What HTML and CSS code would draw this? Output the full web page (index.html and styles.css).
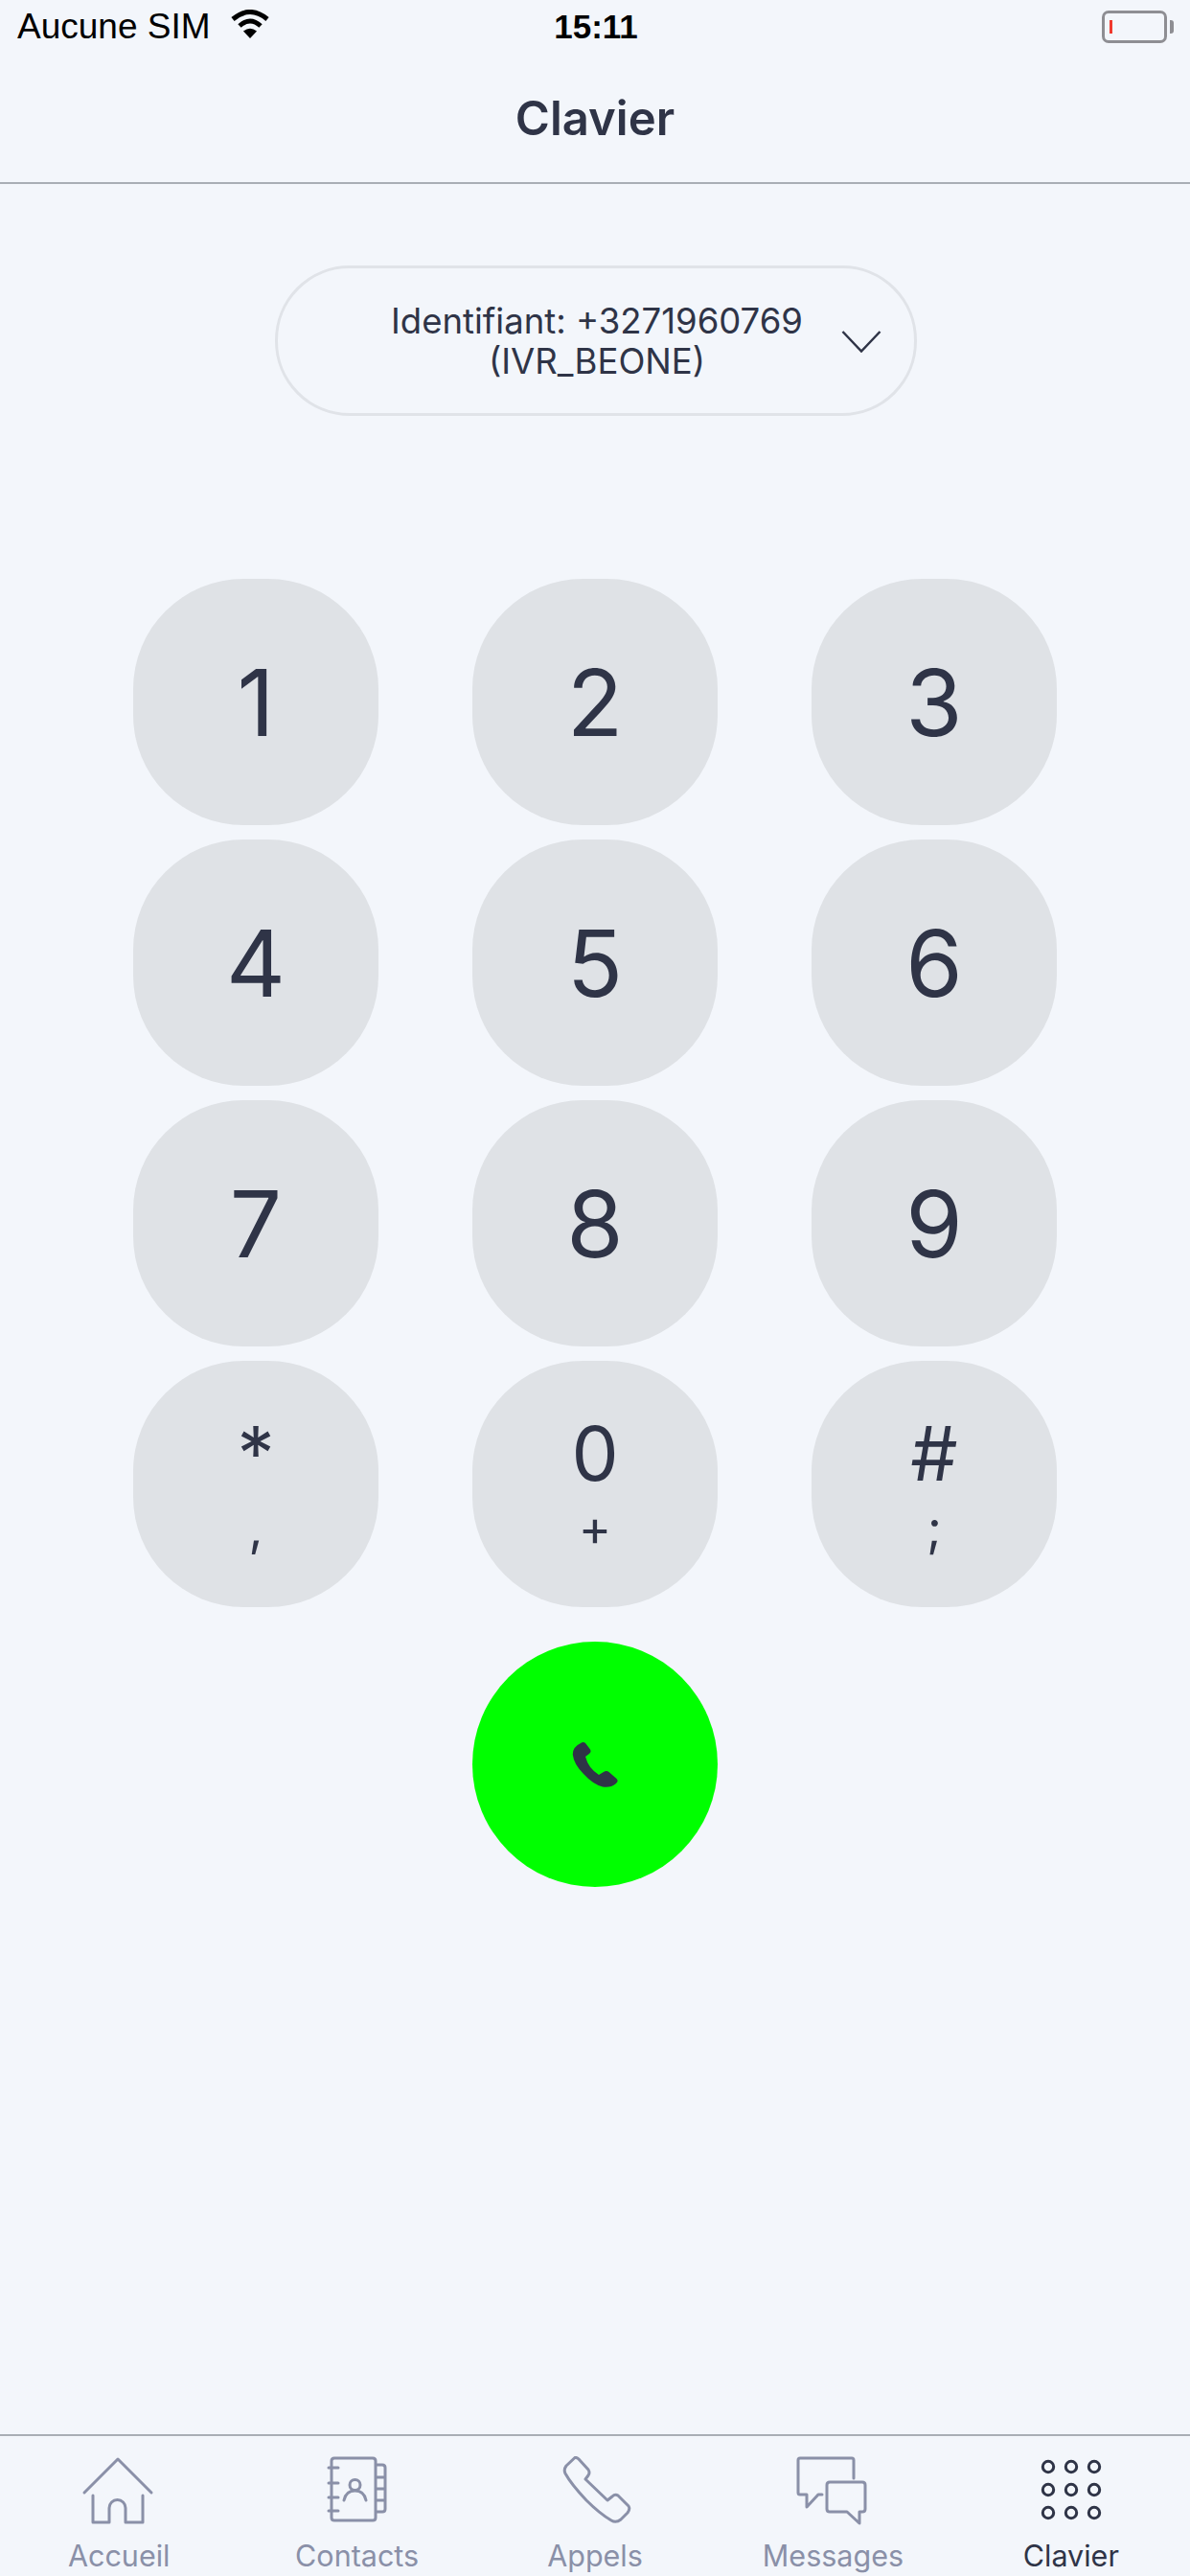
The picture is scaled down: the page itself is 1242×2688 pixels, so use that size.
FILE: index.html
```html
<!DOCTYPE html>
<html lang="fr">
<head>
    <meta charset="UTF-8">
    <meta name="viewport" content="width=device-width, initial-scale=1.0">
    <title>Clavier</title>
    <link rel="stylesheet" href="styles.css">
</head>
<body>
    <div class="status-bar">
        <div class="carrier">
            <span>Aucune SIM</span>
            <svg class="wifi" viewBox="0 0 42 30"><path d="M3 10Q21-5 39 10M10 17Q21 7 32 17" fill="none" stroke="#000" stroke-width="5"/><path d="M14 22.500Q21 17 28 22.500L21 30Z"/></svg>
        </div>
        <div class="clock">15:11</div>
        <div class="battery"><div class="battery-level"></div></div>
    </div>
    <header class="title-bar">Clavier</header>

    <main class="dialer">
        <div class="identity">
            <div class="identity-text">Identifiant: +3271960769<br>(IVR_BEONE)</div>
            <svg class="chevron" viewBox="0 0 42 24"><path d="M1.500 2L21 22.500 40.500 2" fill="none" stroke="#2f3447" stroke-width="2.500"/></svg>
        </div>

        <div class="keypad">
            <button class="key">1</button>
            <button class="key">2</button>
            <button class="key">3</button>
            <button class="key">4</button>
            <button class="key">5</button>
            <button class="key">6</button>
            <button class="key">7</button>
            <button class="key">8</button>
            <button class="key">9</button>
            <button class="key key-double"><span class="key-main">*</span><span class="key-alt">,</span></button>
            <button class="key key-double"><span class="key-main">0</span><span class="key-alt">+</span></button>
            <button class="key key-double"><span class="key-main">#</span><span class="key-alt">;</span></button>
        </div>

        <button class="call-btn">
            <svg class="call-icon" viewBox="0 0 48 48"><path d="M9 2Q12 0 14.500 2.500L19 8.500Q20.500 11 18 13L14 16Q17 28 28 35L33 32Q36 30 38.500 32L46.500 39Q49 41.500 46 44Q40 49 32 47.500Q22 45 12 34Q2 24 .8 14Q.5 6 9 2Z" fill="#2f3447"/></svg>
        </button>
    </main>

    <nav class="tabs">
        <div class="tab">
            <svg class="tab-icon" viewBox="0 0 80 72"><path d="M4 38L39 3 74 38M13 41V69H30V54A8.500 8.500 0 0 1 47 54V69H65V41"/></svg>
            <span>Accueil</span>
        </div>
        <div class="tab">
            <svg class="tab-icon" viewBox="0 0 80 72"><path d="M13 5Q13 2 16 2H56Q59 2 59 5V64Q59 67 56 67H16Q13 67 13 64ZM59 9H66Q69 9 69 12V55Q69 58 66 58H59M59 22H69M59 34H69M59 46H69M10 12H20M10 28H20M10 43H20M10 57H20M26 46Q28 36 37.500 36Q47 36 49 46"/><circle cx="37.500" cy="30" r="5.500"/></svg>
            <span>Contacts</span>
        </div>
        <div class="tab">
            <svg class="tab-icon" viewBox="0 0 80 72"><path d="M19 1.500Q21 1 23 3L33 14Q35 17 33 20L30 24 53 46 58 42Q61 39 64 41L75 52Q77 55 74 59L67 66Q62 70 57 67Q45 60 31 46Q15 29 9 18Q7 14 10 10Z"/></svg>
            <span>Appels</span>
        </div>
        <div class="tab">
            <svg class="tab-icon" viewBox="0 0 80 72"><path d="M62 23V4Q62 2 60 2H6Q4 2 4 4V38Q4 40 6 40H13V53L25 40H29M37 27H71Q74 27 74 30V55Q74 58 71 58H68V70L55 58H37Q34 58 34 55V30Q34 27 37 27Z"/></svg>
            <span>Messages</span>
        </div>
        <div class="tab tab-active">
            <svg class="tab-icon" viewBox="0 0 80 72"><circle cx="16" cy="11" r="5.700"/><circle cx="40" cy="11" r="5.700"/><circle cx="64" cy="11" r="5.700"/><circle cx="16" cy="35" r="5.700"/><circle cx="40" cy="35" r="5.700"/><circle cx="64" cy="35" r="5.700"/><circle cx="16" cy="59" r="5.700"/><circle cx="40" cy="59" r="5.700"/><circle cx="64" cy="59" r="5.700"/></svg>
            <span>Clavier</span>
        </div>
    </nav>
</body>
</html>
```

FILE: styles.css
```css
* {
    box-sizing: border-box;
}
body {
    margin: 0;
    height: 2688px;
    overflow: hidden;
    display: flex;
    flex-direction: column;
    font-family: Inter, "Noto Sans", sans-serif;
    color: #2f3447;
    background-color: #f3f6fb;
}
.status-bar {
    height: 56px;
    padding: 0 16px 0 18px;
    display: grid;
    grid-template-columns: 1fr auto 1fr;
    align-items: center;
    font-family: "Liberation Sans", Arial, sans-serif;
    font-size: 37px;
    color: #000;
}
.carrier {
    display: flex;
    align-items: center;
    gap: 20px;
}
.wifi {
    width: 42px;
    height: 30px;
    margin-bottom: 6px;
}
.clock {
    font-size: 35px;
    font-weight: bold;
}
.battery {
    justify-self: end;
    width: 68px;
    height: 34px;
    margin-right: 8px;
    padding: 7px 5px;
    border: 3px solid #8e8e93;
    border-radius: 7px;
    position: relative;
}
.battery::after {
    content: "";
    position: absolute;
    right: -10px;
    top: 7px;
    width: 4px;
    height: 14px;
    background-color: #8e8e93;
    border-radius: 0 3px 3px 0;
}
.battery-level {
    width: 3px;
    height: 100%;
    background-color: #f03a2e;
}
.title-bar {
    height: 136px;
    display: flex;
    align-items: center;
    justify-content: center;
    font-size: 49px;
    font-weight: 600;
    border-bottom: 2px solid #a9aeb5;
}
.dialer {
    flex: 1;
    display: flex;
    flex-direction: column;
    align-items: center;
    padding-top: 85px;
}
.identity {
    width: 670px;
    height: 157px;
    margin-left: 2px;
    margin-bottom: -1px;
    padding: 0 34px 0 36px;
    display: grid;
    grid-template-columns: 42px 1fr 42px;
    align-items: center;
    border: 3px solid #e0e3e8;
    border-radius: 78px;
}
.identity-text {
    grid-column: 2;
    font-size: 36.500px;
    line-height: 42px;
    text-align: center;
    white-space: nowrap;
}
.chevron {
    grid-column: 3;
    width: 42px;
    height: 24px;
}
.keypad {
    margin-top: 171px;
    display: grid;
    grid-template-columns: repeat(3, 256px);
    grid-auto-rows: 257px;
    column-gap: 98px;
    row-gap: 15px;
}
.key {
    padding: 0;
    border: none;
    border-radius: 115px;
    background-color: #dfe2e6;
    color: #2f3447;
    font-family: inherit;
    font-size: 96px;
    line-height: 1;
    display: flex;
    align-items: center;
    justify-content: center;
}
.key-double {
    flex-direction: column;
}
.key-main {
    font-size: 78px;
    line-height: 94px;
    margin-top: -2px;
}
.key-alt {
    font-size: 52px;
    line-height: 62px;
}
.call-btn {
    width: 256px;
    height: 256px;
    margin-top: 36px;
    padding: 0;
    border: none;
    border-radius: 50%;
    background-color: #00ff00;
    display: flex;
    align-items: center;
    justify-content: center;
}
.call-icon {
    width: 48px;
    height: 48px;
}
.tabs {
    height: 148px;
    padding-top: 21px;
    display: flex;
    border-top: 2px solid #a9aeb5;
}
.tab {
    flex: 1;
    display: flex;
    flex-direction: column;
    align-items: center;
    font-size: 30.500px;
    line-height: 34px;
    color: #8a90a8;
}
.tab-icon {
    width: 80px;
    height: 72px;
    margin-bottom: 15px;
    fill: none;
    stroke: #8a90a8;
    stroke-width: 3;
    stroke-linecap: round;
    stroke-linejoin: round;
}
.tab-active {
    color: #2f3447;
}
.tab-active .tab-icon {
    stroke: #2f3447;
}
```
